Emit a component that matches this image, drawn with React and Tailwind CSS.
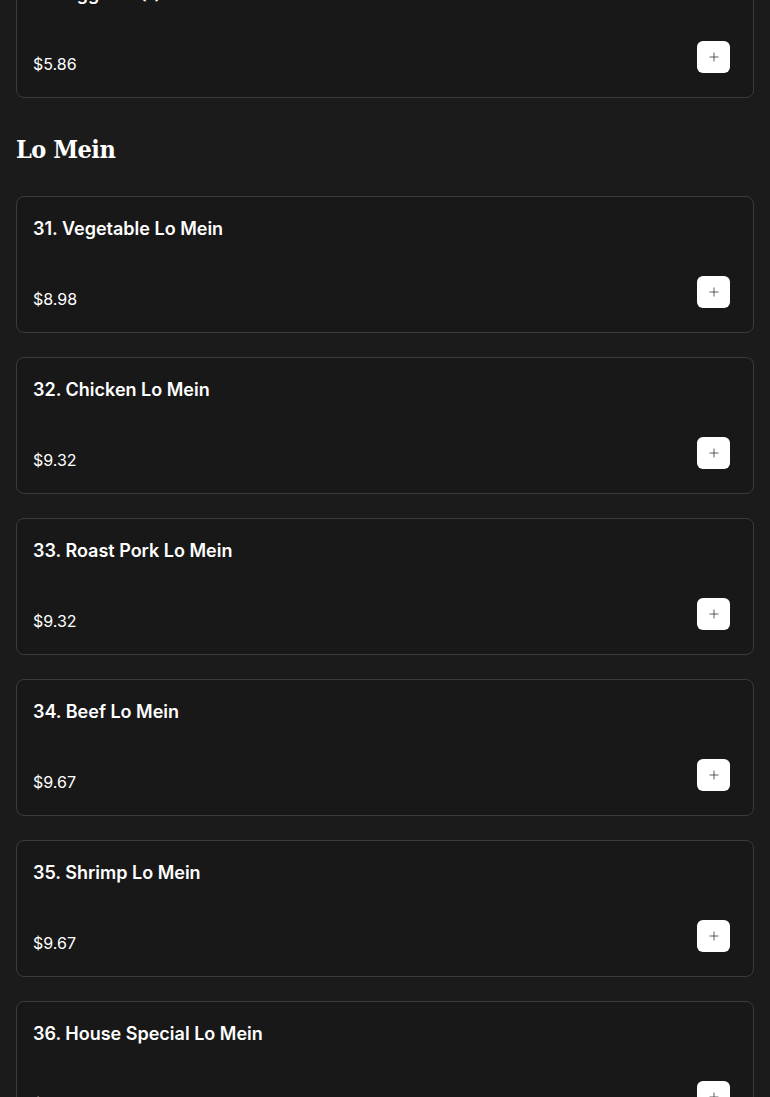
import { Plus } from 'lucide-react'

const items = [
  { name: '31. Vegetable Lo Mein', price: '$8.98' },
  { name: '32. Chicken Lo Mein', price: '$9.32' },
  { name: '33. Roast Pork Lo Mein', price: '$9.32' },
  { name: '34. Beef Lo Mein', price: '$9.67' },
  { name: '35. Shrimp Lo Mein', price: '$9.67' },
  { name: '36. House Special Lo Mein', price: '$10.36' }
]

const MenuCard = ({ name, price }) => (
  <div className="rounded-lg border border-[#3b3b3b] bg-[#181818] px-4 pt-[18px] pb-[21px]">
    <h3 className="text-[18px] leading-7 font-semibold text-white">{name}</h3>
    <div className="mt-[33px] flex items-end justify-between">
      <span className="text-[16px] leading-6 text-white">{price}</span>
      <button className="mr-[7px] mb-[3px] flex h-8 w-[33px] items-center justify-center rounded-md bg-white text-[#222]">
        <Plus size={14} strokeWidth={1.25} />
      </button>
    </div>
  </div>
)

const App = () => {
  return (
    <div className="min-h-screen bg-[#1b1b1b] font-['Inter','Noto_Sans',sans-serif] overflow-hidden">
      <div className="-mt-[39px] px-4">
        <MenuCard name="30. Egg Roll (1)" price="$5.86" />

        <h2 className="mt-[36px] mb-[30px] font-['DejaVu_Serif_Condensed','DejaVu_Serif',serif] text-[25px] leading-8 font-bold tracking-[-0.5px] text-white">
          Lo Mein
        </h2>

        <div className="space-y-6">
          {items.map((item) => (
            <MenuCard key={item.name} {...item} />
          ))}
        </div>
      </div>
    </div>
  )
}

export default App
